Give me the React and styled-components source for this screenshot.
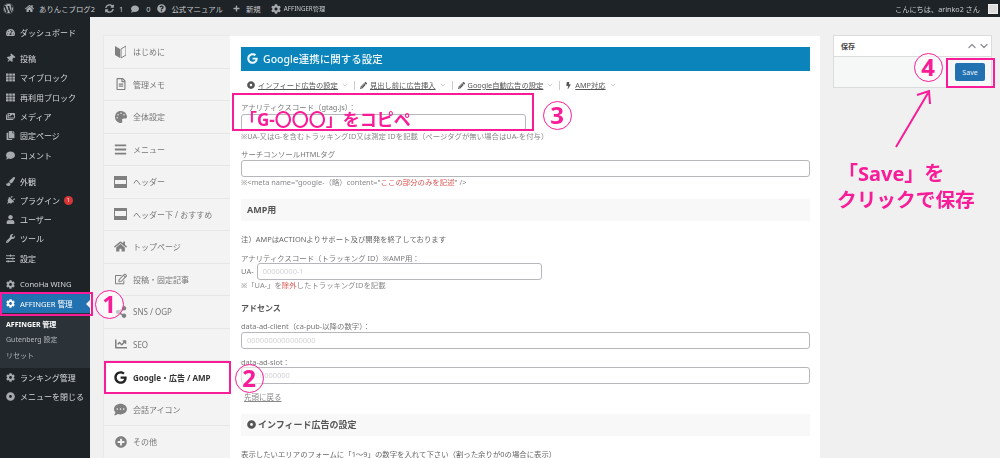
import React from "react";
import styled, { createGlobalStyle } from "styled-components";
import {
  FaWordpress, FaHome, FaSyncAlt, FaComment, FaQuestionCircle, FaPlus, FaCog,
  FaTachometerAlt, FaThumbtack, FaTh, FaImages, FaCopy, FaPaintBrush, FaPlug,
  FaUser, FaWrench, FaSlidersH, FaRegFileAlt, FaPalette, FaBars, FaRegEdit,
  FaShareAlt, FaChartLine, FaGoogle, FaCommentDots, FaPlusCircle, FaDotCircle,
  FaPencilAlt, FaBolt,
} from "react-icons/fa";
import { ChevronDown, ChevronUp } from "lucide-react";

const PINK = "#f81c98";
const FONT = `"Noto Sans", "Noto Sans CJK JP", sans-serif`;

const GlobalStyle = createGlobalStyle`
  html, body { margin: 0; padding: 0; height: 458px; overflow: hidden; background: #f0f0f1; }
  body { font-family: ${FONT}; }
  * { box-sizing: border-box; }
`;

// the reference is a slightly soft, resized capture
const Page = styled.div`
  position: relative;
  width: 1000px;
  height: 458px;
  overflow: hidden;
  filter: blur(0.3px);
`;

const AdminBar = styled.header`
  height: 17px;
  background: #1d2327;
  color: #c9cbcd;
  display: flex;
  align-items: center;
  justify-content: space-between;
  font-size: 7.4px;
  padding: 0 2px 0 3px;
  white-space: nowrap;
`;

const BarGroup = styled.div`
  display: flex;
  align-items: center;
`;

const BarItem = styled.span`
  display: flex;
  align-items: center;
  gap: ${(p) => p.$gap ?? 5}px;
  margin-left: ${(p) => p.$ml ?? 0}px;
  font-size: ${(p) => p.$size ?? 7.4}px;
  svg { color: #a7aaad; flex: none; }
`;

const Avatar = styled.span`
  width: 10px;
  height: 10px;
  margin-left: 3px;
  background: #ddd;
  display: block;
  border: 1px solid #eee;
`;

const Layout = styled.div`
  display: flex;
  height: 441px;
`;

const Sidebar = styled.nav`
  width: 90px;
  flex: none;
  background: #1d2327;
  padding-top: 6px;
  color: #d7d9db;
  font-size: 8px;
`;

const MenuGroup = styled.div`
  margin-bottom: 6.7px;
`;

const MenuItem = styled.div`
  position: relative;
  height: 19.3px;
  display: flex;
  align-items: center;
  gap: 5px;
  padding-left: 6px;
  white-space: nowrap;
  font-size: ${(p) => p.$size ?? 8}px;
  svg { color: #a7aaad; flex: none; width: 9px; }
  ${(p) => p.$current && `
    background: #2271b1;
    color: #fff;
    svg { color: #fff; }
    &::after {
      content: "";
      position: absolute;
      right: 0;
      top: 6px;
      border: 4px solid transparent;
      border-right-color: #f0f0f1;
      border-left: 0;
    }
  `}
`;

const TiltedPin = styled(FaThumbtack)`
  transform: rotate(40deg);
`;

const TiltedPlug = styled(FaPlug)`
  transform: rotate(45deg);
`;

const Badge = styled.span`
  width: 9px;
  height: 9px;
  border-radius: 50%;
  background: #d63638;
  color: #fff;
  font-size: 5px;
  display: flex;
  align-items: center;
  justify-content: center;
  margin-left: -1px;
`;

const SubMenu = styled.div`
  background: #2c3338;
  padding: 3px 0 5px 6px;
  font-size: 7px;
  color: #b4b9be;
`;

const SubItem = styled.div`
  height: 15.5px;
  display: flex;
  align-items: center;
  white-space: nowrap;
  ${(p) => p.$current && "color: #fff; font-weight: 700;"}
`;

const Main = styled.main`
  flex: 1;
  display: flex;
  align-items: flex-start;
  padding: 19px 0 0 13px;
`;

const Tabs = styled.aside`
  width: 127px;
  flex: none;
  background: #f3f3f3;
  border-left: 1px solid #e9e9e9;
  border-top: 1px solid #e9e9e9;
  margin-top: -1px;
`;

const Tab = styled.div`
  position: relative;
  height: 32.5px;
  display: flex;
  align-items: center;
  gap: 6px;
  padding-left: 10px;
  font-size: 8px;
  color: #777;
  border-bottom: 1px solid #e6e6e6;
  white-space: nowrap;
  svg { flex: none; color: #808080; }
  ${(p) => p.$active && `
    background: #fff;
    color: #333;
    font-weight: 700;
    outline: 2px solid ${PINK};
    outline-offset: -2px;
    margin-right: -1px;
    z-index: 1;
    border-bottom: 0;
    svg { color: #222; }
  `}
`;

const TabIconBox = styled.span`
  width: 13px;
  display: flex;
  justify-content: center;
  flex: none;
`;

const Panel = styled.section`
  width: 590px;
  height: 422px;
  flex: none;
  background: #fff;
  padding: 11px 10px 0 11px;
  color: #666;
  overflow: hidden;
`;

const Heading = styled.h2`
  margin: 0;
  height: 23.5px;
  background: #0a84ba;
  color: #f2fafd;
  font-size: 10.5px;
  font-weight: 500;
  display: flex;
  align-items: center;
  gap: 5px;
  padding-left: 6px;
`;

const PageNav = styled.div`
  display: flex;
  align-items: center;
  height: 13px;
  margin-top: 8px;
  padding-left: 6px;
  font-size: 7.3px;
  color: #555;
  white-space: nowrap;
`;

const NavLink = styled.span`
  display: flex;
  align-items: center;
  gap: 3px;
  span { text-decoration: underline; text-underline-offset: 1px; }
  svg { flex: none; }
`;

const NavSep = styled.i`
  width: 1px;
  height: 9px;
  background: #ccc;
  margin: 0 5px;
`;

const Label = styled.div`
  font-size: 7.4px;
  line-height: 10px;
  height: 10px;
  color: #777;
  margin-top: ${(p) => p.$mt ?? 8}px;
  white-space: nowrap;
`;

const Field = styled.input`
  display: block;
  width: ${(p) => p.$w ?? "100%"};
  height: 17px;
  margin-top: ${(p) => p.$mt ?? 0}px;
  padding: 0 5px;
  border: 1px solid #b5b7ba;
  border-radius: 3px;
  background: #fff;
  font: 7.5px ${FONT};
  outline: 0;
  &::placeholder { color: #d2d2d2; }
`;

const UaRow = styled.div`
  display: flex;
  align-items: center;
  gap: 3px;
  font-size: 7.5px;
  color: #777;
`;

const Note = styled.div`
  font-size: 7.4px;
  line-height: 10px;
  height: 10px;
  margin-top: 0.5px;
  color: #888;
  white-space: nowrap;
  em { font-style: normal; color: #d9534f; }
`;

const Band = styled.div`
  height: 22px;
  margin-top: ${(p) => p.$mt ?? 11.5}px;
  background: #f8f8f8;
  display: flex;
  align-items: center;
  gap: 2px;
  padding-left: 6px;
  font-size: 9px;
  font-weight: 700;
  color: #555;
`;

const Copy = styled.p`
  margin: ${(p) => p.$mt ?? 13}px 0 0;
  font-size: 7.4px;
  line-height: 10px;
  height: 10px;
  color: #666;
  white-space: nowrap;
`;

const SubTitle = styled.h3`
  margin: 12.5px 0 0;
  font-size: 8px;
  line-height: 10px;
  font-weight: 700;
  color: #555;
`;

const BackLink = styled.a`
  display: block;
  margin: 8px 0 0 3px;
  font-size: 7.5px;
  line-height: 10px;
  color: #888;
  text-decoration: underline;
`;

const SaveBox = styled.aside`
  width: 159px;
  height: 53px;
  margin: -1px 0 0 13px;
  flex: none;
  border: 1px solid #dcdcde;
  background: #f6f7f7;
`;

const SaveHead = styled.div`
  height: 21px;
  background: #fff;
  border-bottom: 1px solid #dcdcde;
  display: flex;
  align-items: center;
  justify-content: space-between;
  padding: 0 1px 0 7px;
  font-size: 7px;
  font-weight: 700;
  color: #444;
  svg { color: #8c8f94; }
`;

const SaveBody = styled.div`
  display: flex;
  justify-content: flex-end;
  padding: 6px 6px 0 0;
`;

const SaveButton = styled.button`
  width: 30px;
  height: 18px;
  padding: 0;
  border: 0;
  border-radius: 2px;
  background: #2271b1;
  color: #e8f1f8;
  font: 7px ${FONT};
`;

/* annotations painted over the screenshot */
const Frame = styled.div`
  position: absolute;
  left: ${(p) => p.$x}px;
  top: ${(p) => p.$y}px;
  width: ${(p) => p.$w}px;
  height: ${(p) => p.$h}px;
  border: 2px solid ${PINK};
  pointer-events: none;
`;

const Step = styled.div`
  position: absolute;
  left: ${(p) => p.$x - 14.5}px;
  top: ${(p) => p.$y - 14.5}px;
  width: 29px;
  height: 29px;
  border: 1.2px solid ${PINK};
  border-radius: 50%;
  background: rgba(255, 255, 255, 0.55);
  color: ${PINK};
  font-size: 24px;
  font-weight: 700;
  line-height: 1;
  display: flex;
  align-items: center;
  justify-content: center;
`;

const Callout = styled.div`
  position: absolute;
  left: ${(p) => p.$x}px;
  top: ${(p) => p.$y}px;
  color: ${PINK};
  font-size: ${(p) => p.$size}px;
  font-weight: 700;
  line-height: 1;
  white-space: nowrap;
`;

const ArrowSvg = styled.svg`
  position: absolute;
  left: 890px;
  top: 85px;
`;

const BeginnerIcon = () => (
  <svg width="11" height="14" viewBox="0 0 11 14">
    <path d="M0 1 L5 4 V13 L0 10 Z" fill="#808080" />
    <path d="M11 1 L6 4 V13 L11 10 Z" fill="none" stroke="#808080" strokeWidth="1" />
  </svg>
);

const HeaderIcon = ({ footer }) => (
  <svg width="13" height="12" viewBox="0 0 13 12">
    <rect x="0" y="0" width="13" height="12" fill="#808080" />
    <rect x="1" y={footer ? 3 : 4} width="11" height={footer ? 5 : 4} fill="#f3f3f3" />
  </svg>
);

const SIDE_GROUPS = [
  [["ダッシュボード", FaTachometerAlt]],
  [
    ["投稿", TiltedPin],
    ["マイブロック", FaTh],
    ["再利用ブロック", FaTh],
    ["メディア", FaImages],
    ["固定ページ", FaCopy],
    ["コメント", FaComment],
  ],
  [
    ["外観", FaPaintBrush],
    ["プラグイン", TiltedPlug, 1],
    ["ユーザー", FaUser],
    ["ツール", FaWrench],
    ["設定", FaSlidersH],
  ],
];

const TABS = [
  ["はじめに", <BeginnerIcon />],
  ["管理メモ", <FaRegFileAlt size={12} />],
  ["全体設定", <FaPalette size={12} />],
  ["メニュー", <FaBars size={13} />],
  ["ヘッダー", <HeaderIcon />],
  ["ヘッダー下 / おすすめ", <HeaderIcon footer />],
  ["トップページ", <FaHome size={13} />],
  ["投稿・固定記事", <FaRegEdit size={12} />],
  ["SNS / OGP", <FaShareAlt size={12} />],
  ["SEO", <FaChartLine size={12} />],
  ["Google・広告 / AMP", <FaGoogle size={13} />, true],
  ["会話アイコン", <FaCommentDots size={13} />],
  ["その他", <FaPlusCircle size={12} />],
];

const NAV = [
  ["インフィード広告の設定", <FaDotCircle size={8} />],
  ["見出し前に広告挿入", <FaPencilAlt size={7} />],
  ["Google自動広告の設定", <FaPencilAlt size={7} />],
  ["AMP対応", <FaBolt size={7} />],
];

export default function App() {
  return (
    <Page>
      <GlobalStyle />
      <AdminBar>
        <BarGroup>
          <FaWordpress size={11} color="#a7aaad" />
          <BarItem $ml={11}><FaHome size={9} />ありんこブログ2</BarItem>
          <BarItem $ml={10}><FaSyncAlt size={9} />1</BarItem>
          <BarItem $ml={8} $gap={7}><FaComment size={8} />0</BarItem>
          <BarItem $ml={7}><FaQuestionCircle size={9} />公式マニュアル</BarItem>
          <BarItem $ml={10} $gap={6}><FaPlus size={7} />新規</BarItem>
          <BarItem $ml={10} $gap={3} $size={6.2}><FaCog size={10} />AFFINGER管理</BarItem>
        </BarGroup>
        <BarItem $size={7.2}>
          こんにちは、arinko2 さん
          <Avatar />
        </BarItem>
      </AdminBar>
      <Layout>
        <Sidebar>
          {SIDE_GROUPS.map((group, i) => (
            <MenuGroup key={i}>
              {group.map(([label, Icon, badge]) => (
                <MenuItem key={label}>
                  <Icon size={9} />
                  {label}
                  {badge && <Badge>{badge}</Badge>}
                </MenuItem>
              ))}
            </MenuGroup>
          ))}
          <MenuItem $size={7.6}><FaCog size={9} />ConoHa WING</MenuItem>
          <MenuItem $current $size={7.6}><FaCog size={9} />AFFINGER 管理</MenuItem>
          <SubMenu>
            <SubItem $current>AFFINGER 管理</SubItem>
            <SubItem>Gutenberg 設定</SubItem>
            <SubItem>リセット</SubItem>
          </SubMenu>
          <MenuItem><FaCog size={9} />ランキング管理</MenuItem>
          <MenuItem><FaDotCircle size={9} />メニューを閉じる</MenuItem>
        </Sidebar>
        <Main>
          <Tabs>
            {TABS.map(([label, icon, active]) => (
              <Tab key={label} $active={active}>
                <TabIconBox>{icon}</TabIconBox>
                {label}
              </Tab>
            ))}
          </Tabs>
          <Panel>
            <Heading><FaGoogle size={11} />Google連携に関する設定</Heading>
            <PageNav>
              {NAV.map(([label, icon], i) => (
                <React.Fragment key={label}>
                  {i > 0 && <NavSep />}
                  <NavLink>
                    {icon}
                    <span>{label}</span>
                    <ChevronDown size={8} color="#bbb" />
                  </NavLink>
                </React.Fragment>
              ))}
            </PageNav>
            <Label $mt={10}>アナリティクスコード（gtag.js）：</Label>
            <Field $w="285px" $mt={2} readOnly />
            <Note>※UA-又はG-を含むトラッキングID又は測定 IDを記載（ページタグが無い場合はUA-を付与）</Note>
            <Label>サーチコンソールHTMLタグ</Label>
            <Field $mt={0.5} readOnly />
            <Note>※&lt;meta name="google-（略）content="<em>ここの部分のみを記述</em>" /&gt;</Note>
            <Band>AMP用</Band>
            <Copy>注）AMPはACTIONよりサポート及び開発を終了しております</Copy>
            <Label $mt={9}>アナリティクスコード（トラッキング ID）※AMP用：</Label>
            <UaRow>UA-<Field $w="285px" placeholder="00000000-1" readOnly /></UaRow>
            <Note>※「UA-」を<em>除外</em>したトラッキングIDを記載</Note>
            <SubTitle>アドセンス</SubTitle>
            <Label>data-ad-client（ca-pub-以降の数字）：</Label>
            <Field $mt={1} placeholder="0000000000000000" readOnly />
            <Label>data-ad-slot：</Label>
            <Field placeholder="0000000000" readOnly />
            <BackLink>先頭に戻る</BackLink>
            <Band $mt={12}><FaDotCircle size={9} />インフィード広告の設定</Band>
            <Copy>表示したいエリアのフォームに「1〜9」の数字を入れて下さい（割った余りが0の場合に表示）</Copy>
          </Panel>
          <SaveBox>
            <SaveHead>
              保存
              <BarGroup>
                <ChevronUp size={12} strokeWidth={2.6} />
                <ChevronDown size={12} strokeWidth={2.6} />
              </BarGroup>
            </SaveHead>
            <SaveBody><SaveButton>Save</SaveButton></SaveBody>
          </SaveBox>
        </Main>
      </Layout>

      <Frame $x={0} $y={292} $w={93} $h={24} />
      <Frame $x={232} $y={93} $w={302} $h={38} />
      <Frame $x={946} $y={58} $w={49} $h={30} />
      <Step $x={109} $y={304}>1</Step>
      <Step $x={249} $y={378}>2</Step>
      <Step $x={557} $y={115}>3</Step>
      <Step $x={928} $y={67}>4</Step>
      <Callout $x={240} $y={111} $size={17}>「G-〇〇〇」をコピペ</Callout>
      <Callout $x={838} $y={164} $size={20}>「Save」を</Callout>
      <Callout $x={837} $y={190} $size={19.7}>クリックで保存</Callout>
      <ArrowSvg width="50" height="66" viewBox="0 0 50 66">
        <path d="M6 62 L38 8 M27 10 L39 6 L40 19" fill="none" stroke={PINK} strokeWidth="2" />
      </ArrowSvg>
    </Page>
  );
}
